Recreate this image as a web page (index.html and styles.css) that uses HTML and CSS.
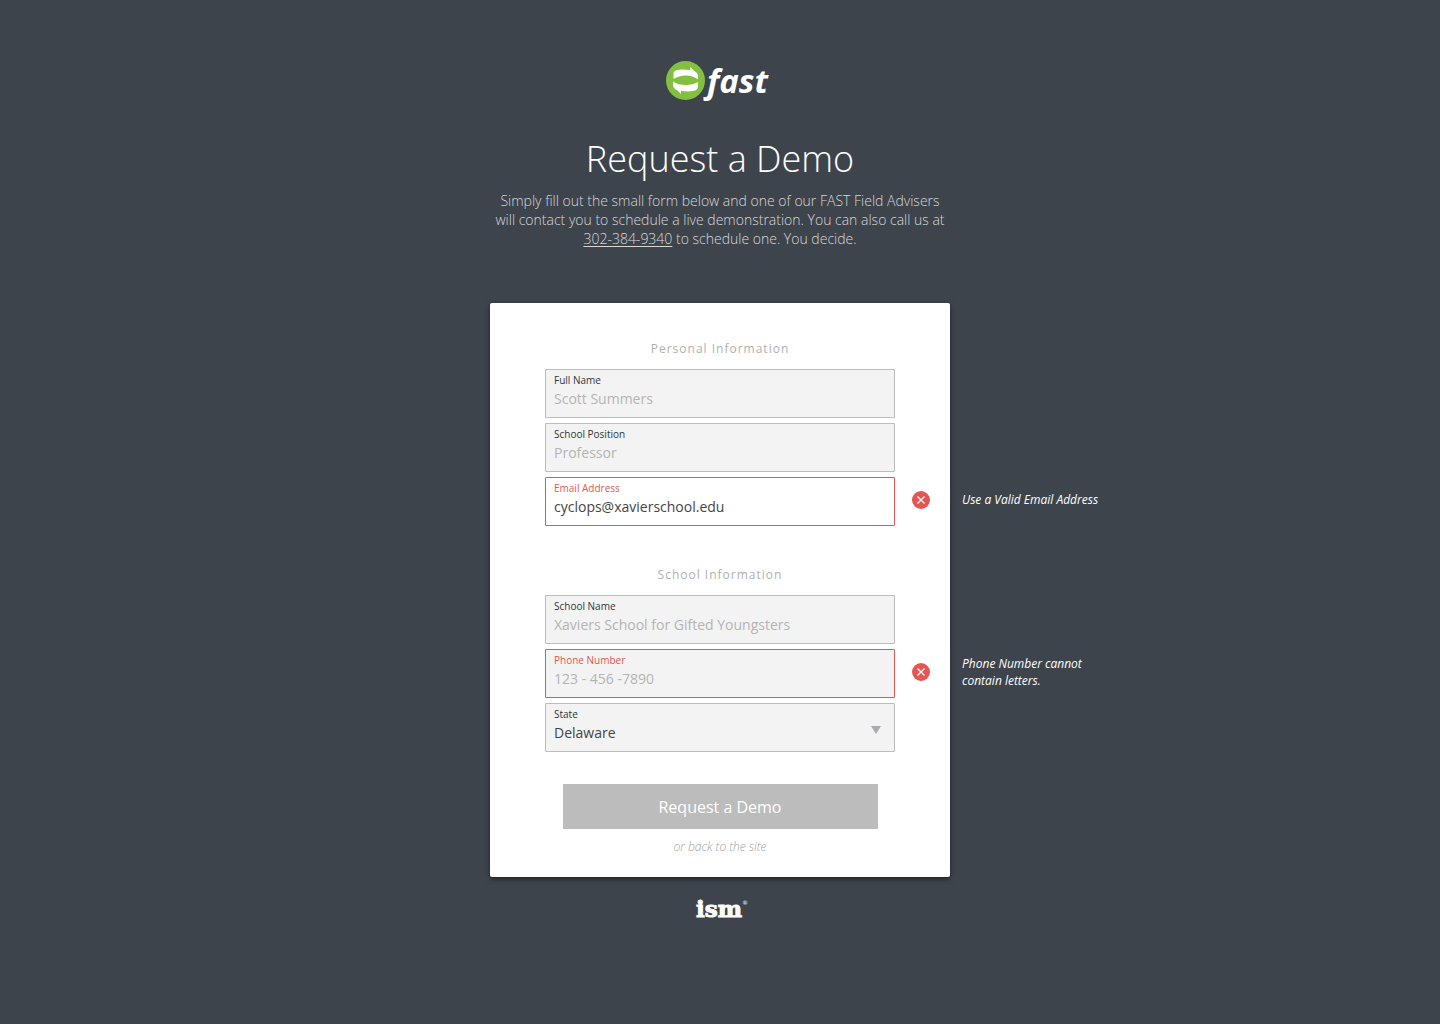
FILE: index.html
```html
<!DOCTYPE html>
<html lang="en">
<head>
  <meta charset="utf-8">
  <meta name="viewport" content="width=device-width, initial-scale=1">
  <title>Request a Demo</title>
  <link rel="stylesheet" href="styles.css">
</head>
<body>
  <header class="intro">
    <div class="brand">
      <svg class="brand-mark" viewBox="0 0 39 39" aria-hidden="true">
        <circle cx="19.500" cy="19.500" r="19.500" fill="#83bf41"/>
        <path fill="#fff" d="M7.500 18V12.500Q7.500 9.800 11 9Q17 7.800 24.300 9.300V6L27.800 9.500Q31.500 11.500 32 14.500V18.500Q27 14.500 20 14.500Q13 14.500 7.500 18Z"/>
        <path fill="#fff" d="M7 20.500Q12 24 19.500 24Q27 24 32 21V25.500Q32 28.800 28 29.800Q22 31 15 29.800V33L11.500 29.500Q7.500 27.500 7 24.500Z"/>
      </svg>
      <span class="brand-name">fast</span>
    </div>
    <h1 class="title">Request a Demo</h1>
    <p class="lead">Simply fill out the small form below and one of our FAST Field Advisers will contact you to schedule a live demonstration. You can also call us at <a class="phone" href="tel:302-384-9340">302-384-9340</a> to schedule one. You decide.</p>
  </header>

  <main>
    <form class="card" novalidate>
      <fieldset class="group">
        <legend class="group-title">Personal Information</legend>
        <div class="field">
          <label class="label" for="full-name">Full Name</label>
          <input class="control" id="full-name" type="text" placeholder="Scott Summers">
        </div>
        <div class="field">
          <label class="label" for="position">School Position</label>
          <input class="control" id="position" type="text" placeholder="Professor">
        </div>
        <div class="field field-invalid field-active">
          <label class="label" for="email">Email Address</label>
          <input class="control" id="email" type="email" value="cyclops@xavierschool.edu" spellcheck="false" aria-describedby="email-error">
          <div class="error">
            <svg class="error-icon" viewBox="0 0 18 18" aria-hidden="true"><circle cx="9" cy="9" r="9" fill="#e35654"/><path d="M5.500 5.500l7 7M12.500 5.500l-7 7" stroke="#fff" stroke-width="1.300"/></svg>
            <span class="error-text" id="email-error">Use a Valid Email Address</span>
          </div>
        </div>
      </fieldset>

      <fieldset class="group">
        <legend class="group-title">School Information</legend>
        <div class="field">
          <label class="label" for="school">School Name</label>
          <input class="control" id="school" type="text" placeholder="Xaviers School for Gifted Youngsters">
        </div>
        <div class="field field-invalid">
          <label class="label" for="phone">Phone Number</label>
          <input class="control" id="phone" type="tel" placeholder="123 - 456 -7890" aria-describedby="phone-error">
          <div class="error">
            <svg class="error-icon" viewBox="0 0 18 18" aria-hidden="true"><circle cx="9" cy="9" r="9" fill="#e35654"/><path d="M5.500 5.500l7 7M12.500 5.500l-7 7" stroke="#fff" stroke-width="1.300"/></svg>
            <span class="error-text" id="phone-error">Phone Number cannot contain letters.</span>
          </div>
        </div>
        <div class="field">
          <label class="label" for="state">State</label>
          <select class="control select" id="state">
            <option>Delaware</option>
          </select>
          <svg class="arrow" viewBox="0 0 10 8" aria-hidden="true"><path d="M0 0h10L5 8z" fill="#a9abae"/></svg>
        </div>
      </fieldset>

      <button class="submit" type="submit">Request a Demo</button>
      <a class="back" href="#">or back to the site</a>
    </form>
  </main>

  <footer class="footer">
    <span class="ism">ism</span><span class="registered">®</span>
  </footer>
</body>
</html>
```
FILE: styles.css
```css
* {
  box-sizing: border-box;
}

body {
  margin: 0;
  min-height: 100vh;
  background: #3d444c;
  color: #fff;
  font-family: "Open Sans", "Noto Sans", sans-serif;
}

.intro {
  max-width: 460px;
  margin: 0 auto;
  padding-top: 61px;
  text-align: center;
}

.brand {
  display: flex;
  justify-content: center;
  align-items: center;
  gap: 2px;
  height: 39px;
  padding-right: 6px;
}

.brand-mark {
  width: 39px;
  height: 39px;
}

.brand-name {
  font-size: 33px;
  line-height: 36px;
  font-weight: 700;
  font-style: italic;
}

.title {
  margin: 33px 0 6px;
  font-size: 36px;
  line-height: 52px;
  font-weight: 300;
}

.lead {
  margin: 0;
  color: #d8d8d8;
  font-size: 14px;
  line-height: 19px;
  font-weight: 300;
}

.phone {
  color: inherit;
  text-underline-offset: 2px;
}

.card {
  display: flex;
  flex-direction: column;
  align-items: center;
  max-width: 460px;
  margin: 55px auto 0;
  padding: 38px 55px 22px;
  background: #fff;
  border-radius: 2px;
  box-shadow: 0 2px 5px rgba(0, 0, 0, 0.5);
}

.group {
  display: flex;
  flex-direction: column;
  gap: 5px;
  width: 100%;
  min-width: 0;
  margin: 0;
  padding: 0;
  border: 0;
}

.group + .group {
  margin-top: 41px;
}

.group-title {
  margin: 0 auto 12px;
  padding: 0;
  color: #b0b0b0;
  font-size: 12px;
  line-height: 16px;
  letter-spacing: 1px;
}

.field {
  position: relative;
  display: flex;
  flex-direction: column;
  gap: 2px;
  padding: 3px 8px 8px;
  background: #f3f3f3;
  border: 1px solid #bcbcbc;
  border-radius: 1px;
}

.field-invalid {
  border-color: #e35654;
}

.field-active {
  background: #fff;
}

.label {
  color: #30353c;
  font-size: 10px;
  line-height: 14px;
}

.field-invalid .label {
  color: #e35654;
}

.control {
  width: 100%;
  height: 20px;
  margin: 0;
  padding: 0;
  background: transparent;
  border: 0;
  outline: 0;
  color: #444;
  font-family: inherit;
  font-size: 14px;
  line-height: 20px;
}

.control::placeholder {
  color: #b4b4b4;
  opacity: 1;
}

.select {
  appearance: none;
}

.arrow {
  position: absolute;
  right: 13px;
  bottom: 17px;
  width: 10px;
  height: 8px;
  pointer-events: none;
}

.error {
  position: absolute;
  top: 0;
  bottom: 4px;
  left: 100%;
  display: flex;
  align-items: center;
  gap: 32px;
  padding-left: 18px;
}

.error-icon {
  flex: none;
  width: 18px;
  height: 18px;
}

.error-text {
  width: 140px;
  font-size: 12px;
  line-height: 17px;
  font-style: italic;
}

.submit {
  width: 90%;
  height: 45px;
  margin: 32px 0 10px;
  padding: 0;
  background: #bcbcbc;
  border: 0;
  color: #fff;
  font-family: inherit;
  font-size: 16px;
  font-weight: 500;
}

.back {
  color: #a0a0a0;
  font-size: 12px;
  line-height: 16px;
  font-weight: 300;
  font-style: italic;
  text-decoration: none;
}

.footer {
  display: flex;
  justify-content: center;
  padding: 16px 0 24px 4px;
  font-family: "DejaVu Serif", serif;
}

.ism {
  font-size: 23px;
  line-height: 32px;
  font-weight: 700;
  -webkit-text-stroke: 1px #fff;
}

.registered {
  font-size: 6px;
  line-height: 20px;
}
```
